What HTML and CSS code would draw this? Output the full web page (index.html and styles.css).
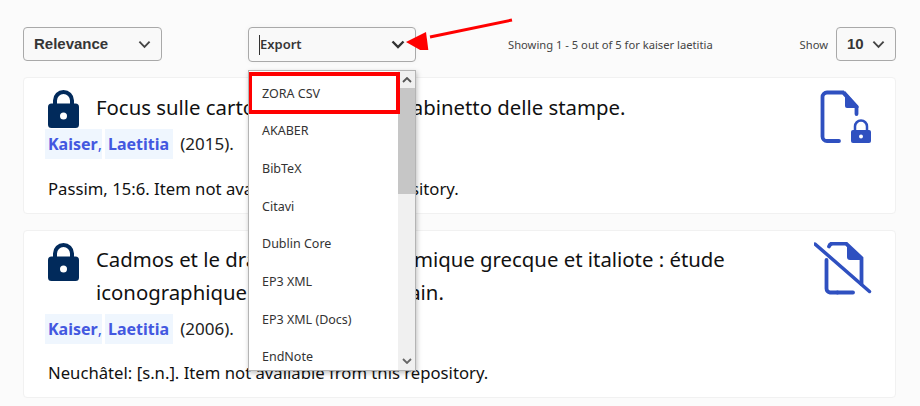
FILE: index.html
```html
<!DOCTYPE html>
<html lang="en">
<head>
<meta charset="utf-8">
<title>Search results</title>
<link rel="stylesheet" href="styles.css">
</head>
<body>
<div class="toolbar">
  <div class="select select-sort">
    <span>Relevance</span>
    <svg class="chev" viewBox="0 0 14 9"><path d="M1.5 1.5 7 7l5.5-5.5"/></svg>
  </div>
  <div class="export-wrap">
    <div class="select select-export">
      <span class="caret"></span><span>Export</span>
      <svg class="chev" viewBox="0 0 14 9"><path d="M1.5 1.5 7 7l5.5-5.5"/></svg>
    </div>
    <div class="menu">
      <ul class="menu-list">
        <li>ZORA CSV</li>
        <li>AKABER</li>
        <li>BibTeX</li>
        <li>Citavi</li>
        <li>Dublin Core</li>
        <li>EP3 XML</li>
        <li>EP3 XML (Docs)</li>
        <li>EndNote</li>
      </ul>
      <div class="scrollbar">
        <svg class="sb-arrow" viewBox="0 0 10 6"><path d="M1 5 5 1l4 4"/></svg>
        <div class="sb-thumb"></div>
        <svg class="sb-arrow sb-down" viewBox="0 0 10 6"><path d="M1 1l4 4 4-4"/></svg>
      </div>
      <div class="highlight"></div>
    </div>
  </div>
  <div class="count">Showing 1 - 5 out of 5 for kaiser laetitia</div>
  <div class="show">
    <span class="show-label">Show</span>
    <div class="select select-show">
      <span>10</span>
      <svg class="chev" viewBox="0 0 14 9"><path d="M1.5 1.5 7 7l5.5-5.5"/></svg>
    </div>
  </div>
</div>

<article class="card">
  <div class="main">
    <div class="title-row">
      <svg class="lock" viewBox="0 0 31 38"><path class="lock-body" d="M3.500 13.500h24a3.500 3.500 0 0 1 3.500 3.500v17.500a3.500 3.500 0 0 1-3.500 3.500h-24a3.500 3.500 0 0 1-3.500-3.500V17a3.500 3.500 0 0 1 3.500-3.500z"/><path class="lock-shackle" d="M7 15V10.500a8.500 8.500 0 0 1 17 0V15"/><circle class="lock-hole" cx="15.500" cy="26" r="3.500"/></svg>
      <h2 class="title">Focus sulle cartoline del nostro Gabinetto delle stampe.</h2>
    </div>
    <p class="authors"><a class="author">Kaiser<span class="comma">,</span></a><a class="author author-2">Laetitia</a><span class="year">(2015).</span></p>
    <p class="source">Passim, 15:6. Item not available from this repository.</p>
  </div>
  <svg class="doc" viewBox="0 0 58 56">
    <path class="doc-line" d="M25 52H13a4.500 4.500 0 0 1-4.500-4.500V8A4.500 4.500 0 0 1 13 3.500h16L42.500 18v7"/>
    <path class="doc-fill" d="M31 2 44.500 17v2H33a2 2 0 0 1-2-2z"/>
    <path class="doc-fill" d="M39 41h16a2 2 0 0 1 2 2v9a2 2 0 0 1-2 2H39a2 2 0 0 1-2-2v-9a2 2 0 0 1 2-2z"/>
    <path class="doc-shackle" d="M41 41v-3.500a6 6 0 0 1 12 0V41"/>
    <circle class="doc-hole" cx="47" cy="47.500" r="2"/>
  </svg>
</article>

<article class="card">
  <div class="main">
    <div class="title-row">
      <svg class="lock" viewBox="0 0 31 38"><path class="lock-body" d="M3.500 13.500h24a3.500 3.500 0 0 1 3.500 3.500v17.500a3.500 3.500 0 0 1-3.500 3.500h-24a3.500 3.500 0 0 1-3.500-3.500V17a3.500 3.500 0 0 1 3.500-3.500z"/><path class="lock-shackle" d="M7 15V10.500a8.500 8.500 0 0 1 17 0V15"/><circle class="lock-hole" cx="15.500" cy="26" r="3.500"/></svg>
      <h2 class="title">Cadmos et le dragon dans la céramique grecque et italiote : étude iconographique d'un mythe thébain.</h2>
    </div>
    <p class="authors"><a class="author">Kaiser<span class="comma">,</span></a><a class="author author-2">Laetitia</a><span class="year">(2006).</span></p>
    <p class="source">Neuchâtel: [s.n.]. Item not available from this repository.</p>
  </div>
  <svg class="doc" viewBox="0 0 58 56">
    <path class="doc-line" d="M23.500 50.500H16a4 4 0 0 1-3.500-4V18"/>
    <path class="doc-line" d="M15 4.500a4 4 0 0 1 4-3H32L47.500 16V42"/>
    <path class="doc-line" d="M23.500 50.500H39"/>
    <path class="doc-fill" d="M33 2 48 17v1H36a3 3 0 0 1-3-3z"/>
    <path class="doc-slash" d="M1 2 55.500 49.500"/>
  </svg>
</article>

<svg class="arrow" viewBox="0 0 120 40">
  <path class="arrow-line" d="M110 10 28 27"/>
  <path class="arrow-head" d="M4 32 24 22l3 23z"/>
</svg>
</body>
</html>
```
FILE: styles.css
```css
* { box-sizing: border-box; }
html, body { margin: 0; height: 100%; overflow: hidden; }
body {
  position: relative;
  padding: 27px 24px 0 23px;
  background: #fbfbfb;
  color: #111;
  font-family: "Noto Sans", "Open Sans", "Liberation Sans", sans-serif;
}
.toolbar { display: flex; align-items: flex-start; height: 35px; margin-bottom: 15px; }
.select {
  display: flex; align-items: center; justify-content: space-between;
  height: 34px; padding: 0 10px 2px;
  background: #f9f9f9;
  border: 1px solid #a9a9a9; border-radius: 4px;
  font: bold 15px "Liberation Sans", Arial, sans-serif;
  color: #363636;
}
.chev { width: 13px; height: 9px; margin-top: 2px; fill: none; stroke: #444; stroke-width: 2; }
.select-sort { width: 139px; }
.export-wrap { position: relative; width: 168px; margin-left: 86px; }
.select-export { height: 35px; box-shadow: 0 0 6px rgba(0,0,0,.04); font: 600 13px "Noto Sans", sans-serif; }
.select-export span:nth-child(2) { margin-right: auto; }
.select-export .chev { width: 14px; stroke: #333; stroke-width: 2.400; }
.caret { width: 1px; height: 20px; margin-top: 2px; background: #333; }
.menu {
  position: absolute; z-index: 5; left: 0; top: 43px;
  display: flex; width: 168px; height: 301px; overflow: hidden;
  background: #fff; border: 1px solid #b4b4b4;
  box-shadow: 1px 2px 5px rgba(0,0,0,.25);
}
.menu-list { flex: 1; margin: 0; padding: 3.500px 0 0 13px; list-style: none; font-size: 12.500px; color: #333; }
.menu-list li { height: 37.700px; line-height: 37.700px; white-space: nowrap; }
.scrollbar { display: flex; flex-direction: column; width: 17px; background: #f0f0f0; }
.sb-arrow { flex: none; width: 10px; height: 6px; margin: 6px auto 5px; fill: none; stroke: #555; stroke-width: 1.800; }
.sb-thumb { flex: none; height: 106px; background: #c6c6c6; }
.sb-down { margin-top: auto; margin-bottom: 6px; stroke: #666; }
.highlight { position: absolute; left: -1px; top: 1px; width: 152px; height: 42px; border: 4px solid #f00; }
.count { margin-left: 92px; margin-top: 10px; width: 291px; font-size: 11.200px; line-height: 15px; color: #444; }
.show { display: flex; align-items: center; gap: 8px; margin-left: auto; }
.show-label { font-size: 11.200px; color: #444; }
.select-show { width: 60px; }

.card {
  display: flex; align-items: flex-start;
  margin-bottom: 16px; padding: 11px 24px 12px 24px;
  background: #fff; border: 1px solid #f1f1f1; border-radius: 4px;
}
.main { flex: 1; padding-top: 1.500px; }
.title-row { display: flex; align-items: flex-start; gap: 17px; }
.lock { flex: none; width: 31px; height: 38px; margin: -.5px 0 -4.500px; }
.lock-body { fill: #012a5b; }
.lock-shackle { fill: none; stroke: #012a5b; stroke-width: 4; }
.lock-hole { fill: #fff; }
.title { margin: 0; font-size: 20.350px; font-weight: 400; line-height: 32.500px; color: #111; }
.authors { display: flex; margin: 5.500px 0 0 -3px; font-size: 16px; line-height: 30px; }
.author { padding: 0 0 0 3px; background: #eff6fe; color: #4358e0; font-weight: 700; }
.comma { font-weight: 400; }
.author-2 { margin: 0 7px 0 3px; padding-right: 4px; }
.year { color: #222; font-size: 17px; }
.source { margin: 16.500px 0 0; font-size: 16.700px; line-height: 25px; color: #111; }
.doc { flex: none; width: 58px; height: 56px; margin-left: 1px; margin-right: -1px; }
.doc-line { fill: none; stroke: #2f50c0; stroke-width: 3.800; stroke-linecap: round; }
.doc-fill { fill: #2f50c0; }
.doc-shackle { fill: none; stroke: #2f50c0; stroke-width: 2.500; }
.doc-hole { fill: #fff; }
.doc-slash { fill: none; stroke: #2f50c0; stroke-width: 3.500; stroke-linecap: round; }
.arrow { position: absolute; z-index: 6; left: 402px; top: 10px; width: 120px; height: 40px; }
.arrow-line { fill: none; stroke: #f00; stroke-width: 3; }
.arrow-head { fill: #f00; }
```
